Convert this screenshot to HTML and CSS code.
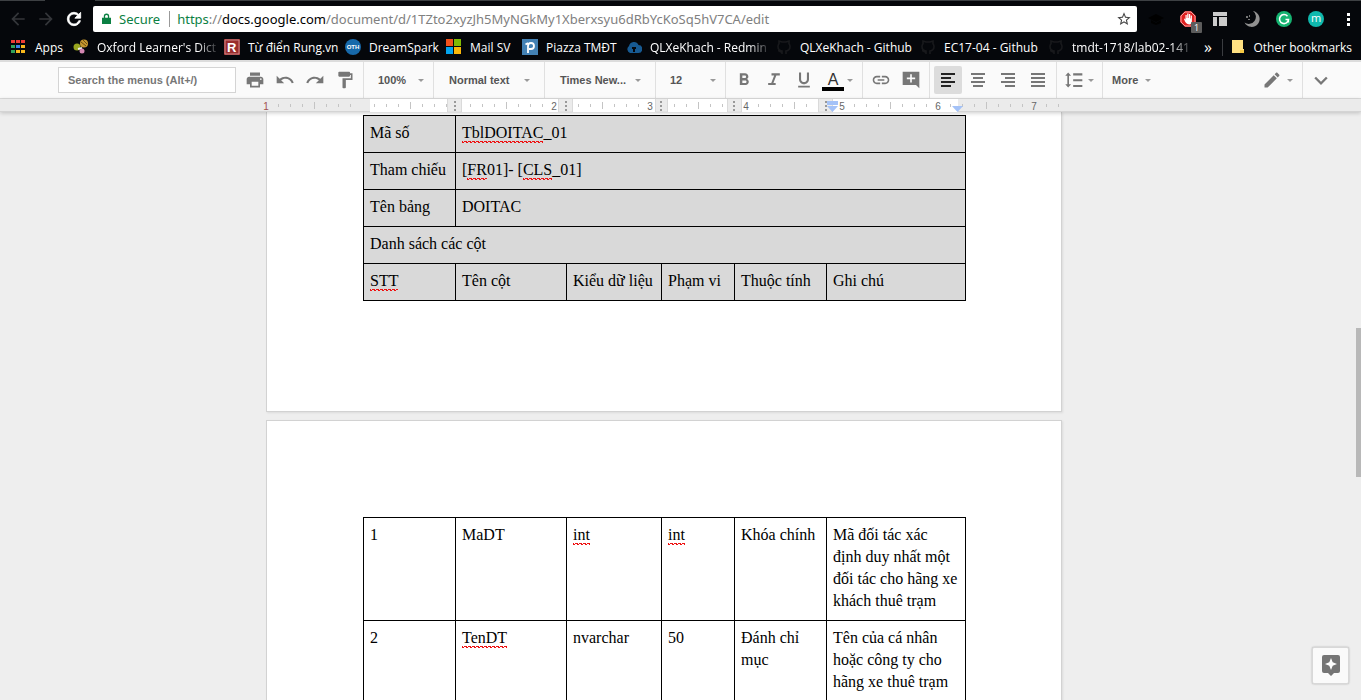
FILE: index.html
```html
<!DOCTYPE html>
<html lang="vi">
<head>
<meta charset="utf-8">
<title>Document</title>
<link rel="stylesheet" href="styles.css">
</head>
<body>
<header class="browser">
  <div class="tab-edge"></div>
  <div class="nav-row">
    <div class="nav-buttons">
      <button class="nav-btn dim" aria-label="Back"><svg viewBox="0 0 24 24"><path d="M20 11H7.83l5.59-5.59L12 4l-8 8 8 8 1.41-1.41L7.83 13H20v-2z"/></svg></button>
      <button class="nav-btn dim" aria-label="Forward"><svg viewBox="0 0 24 24"><path d="M4 13h12.17l-5.59 5.59L12 20l8-8-8-8-1.41 1.41L16.17 11H4v2z"/></svg></button>
      <button class="nav-btn" aria-label="Reload"><svg viewBox="0 0 24 24"><path d="M17.65 6.35C16.2 4.9 14.21 4 12 4c-4.42 0-7.99 3.58-7.99 8s3.57 8 7.99 8c3.73 0 6.84-2.55 7.73-6h-2.08c-.82 2.33-3.04 4-5.65 4-3.31 0-6-2.69-6-6s2.69-6 6-6c1.66 0 3.14.69 4.22 1.78L13 11h7V4l-2.35 2.35z" stroke="#fff"/></svg></button>
    </div>
    <div class="address">
      <svg class="lock" viewBox="0 0 10 13"><path d="M0 5h10v7H0zM2 5V3.500a3 3 0 0 1 6 0V5" fill="#0b8043"/><path d="M3.500 5V3.500a1.500 1.500 0 0 1 3 0V5z" fill="#fff"/></svg>
      <span class="secure">Secure</span>
      <span class="url"><span class="green">https</span>://<span class="host">docs.google.com</span>/document/d/1TZto2xyzJh5MyNGkMy1Xberxsyu6dRbYcKoSq5hV7CA/edit</span>
      <svg class="star" viewBox="0 0 24 24"><path fill="#444" d="M22 9.24l-7.19-.62L12 2 9.19 8.63 2 9.24l5.46 4.73L5.82 21 12 17.27 18.18 21l-1.63-7.03L22 9.24zM12 15.4l-3.76 2.27 1-4.28-3.32-2.88 4.38-.38L12 6.1l1.71 4.04 4.38.38-3.32 2.88 1 4.28L12 15.4z"/></svg>
    </div>
    <div class="extensions">
      <svg viewBox="0 0 16 16"><path fill="#000" d="M0 7l8-4 8 4-8 4zM3 9l5 3 5-3v3l-5 2-5-2z"/></svg>
      <span class="blocker"><svg viewBox="0 0 16 16"><path d="M5 0h6l5 5v6l-5 5H5l-5-5V5z" fill="#e02020"/><path d="M5 1h6l4 4v6l-4 4H5l-4-4V5z" fill="none" stroke="#fff" stroke-width=".6"/><path d="M4 8l1-.5L5.500 9V4h1.200v3h.5V2.500h1.300V7H9V3h1.200v4.500h.5V4.500h1.200V10c0 2-1 3.500-2.500 3.500S6 12.500 5 10.500z" fill="#fff"/></svg><span class="count">1</span></span>
      <svg viewBox="0 0 16 16"><path fill="#cbcbcb" d="M1 1h14v4H1zM1 6h4v9H1zM7 6h8v9H7z"/></svg>
      <svg viewBox="0 0 16 16"><path fill="#919191" d="M9 0a8 8 0 1 1-8.500 11.500A6 6 0 0 0 9 0z"/><path fill="#777" d="M2 5h2v2H2zM5 4h1v2H5zM4 8h2v1H4z"/></svg>
      <svg viewBox="0 0 16 16"><circle cx="8" cy="8" r="8" fill="#15b371"/><path d="M11.500 5.200A4.500 4.500 0 1 0 12.500 8.500H9.500M12.300 8.500v3" fill="none" stroke="#fff" stroke-width="1.600"/></svg>
      <span class="avatar">m</span>
      <svg viewBox="0 0 16 16"><path fill="#fff" d="M7 2h3v3H7zM7 7h3v3H7zM7 12h3v3H7z"/></svg>
    </div>
  </div>
  <nav class="bookmarks">
    <a href="#"><svg viewBox="0 0 16 16"><path fill="#ee3b34" d="M0 1h4v3H0zM5 1h4v3H5zM10 1h4v3h-4z"/><path fill="#2fa25a" d="M0 6h4v3H0zM0 11h4v3H0z"/><path fill="#3b82ea" d="M5 6h4v3H5z"/><path fill="#f8b81c" d="M10 6h4v3h-4zM5 11h4v3H5zM10 11h4v3h-4z"/><path stroke="#05070b" d="M4.500 0v15M9.500 0v15"/></svg><span>Apps</span></a>
    <a href="#"><svg viewBox="0 0 16 16"><circle cx="11" cy="4.500" r="4" fill="#c4972f"/><path d="M8 3l5 4M10 1l4 4" stroke="#6b4d12"/><circle cx="4" cy="8" r="3.500" fill="#98a51e"/><path d="M5 10l4-1" stroke="#eee" stroke-width="2"/><circle cx="9" cy="12" r="2.500" fill="#d487b2"/></svg><span class="fade">Oxford Learner's Dict</span></a>
    <a href="#"><svg viewBox="0 0 16 16"><path fill="#9a2d2d" d="M0 0h16v16H0z"/><path d="M1 1h14v14H1z" stroke="#c88" fill="none"/><text x="3" y="13" class="mark-r">R</text></svg><span>Từ điển Rung.vn</span></a>
    <a href="#"><svg viewBox="0 0 16 16"><circle cx="8" cy="8" r="8" fill="#1769aa"/><text x="8" y="10" class="mark-oth">OTH</text></svg><span>DreamSpark</span></a>
    <a href="#"><svg viewBox="0 0 16 16"><path fill="#f1511b" d="M0 0h7v7H0z"/><path fill="#80bb03" d="M8 0h7v7H8z"/><path fill="#03a4ee" d="M0 8h7v7H0z"/><path fill="#fbb809" d="M8 8h7v7H8z"/></svg><span>Mail SV</span></a>
    <a href="#"><svg viewBox="0 0 16 16"><path fill="#4381b4" d="M0 0h16v16H0z"/><path d="M6 14V7a3 3 0 1 1 3 3H7M3.500 5.500L6 4" stroke="#fff" stroke-width="1.800" fill="none"/></svg><span>Piazza TMĐT</span></a>
    <a href="#"><svg viewBox="0 0 16 16"><path fill="#175a92" d="M4 14a4 4 0 0 1-1-7 5 5 0 0 1 9.500-1A4 4 0 0 1 12 14z"/><path fill="#05070b" d="M6 8h4v2H9v3H7v-3H6z"/></svg><span class="fade">QLXeKhach - Redmin</span></a>
    <a href="#"><svg viewBox="0 0 16 16"><path d="M6 15v-3c-3-.5-4-2-4-4.500 0-1 .3-2 1-2.700L3 2l3 1h4l3-1v2.800c.7.7 1 1.700 1 2.700 0 2.500-1 4-4 4.500v3M6 13c-2 .5-2-1-4-1.500" fill="none" stroke="#18191c" stroke-width="1.600"/></svg><span>QLXeKhach - Github</span></a>
    <a href="#"><svg viewBox="0 0 16 16"><path d="M6 15v-3c-3-.5-4-2-4-4.500 0-1 .3-2 1-2.700L3 2l3 1h4l3-1v2.800c.7.7 1 1.700 1 2.700 0 2.500-1 4-4 4.500v3M6 13c-2 .5-2-1-4-1.500" fill="none" stroke="#18191c" stroke-width="1.600"/></svg><span>EC17-04 - Github</span></a>
    <a href="#"><svg viewBox="0 0 16 16"><path d="M6 15v-3c-3-.5-4-2-4-4.500 0-1 .3-2 1-2.700L3 2l3 1h4l3-1v2.800c.7.7 1 1.700 1 2.700 0 2.500-1 4-4 4.500v3M6 13c-2 .5-2-1-4-1.500" fill="none" stroke="#18191c" stroke-width="1.600"/></svg><span class="fade">tmdt-1718/lab02-141</span></a>
    <button class="overflow">»</button>
    <a href="#" class="other"><svg viewBox="0 0 16 16"><path fill="#ffe082" d="M1 1h11v9h1v4H1z"/><path fill="#f6c945" d="M9 14v-3h4v3z"/></svg><span>Other bookmarks</span></a>
  </nav>
</header>

<div class="toolbar" role="toolbar">
  <input class="search" type="text" aria-label="Search the menus" placeholder="Search the menus (Alt+/)">
  <div class="group first">
    <button aria-label="Print"><svg viewBox="0 0 24 24"><path d="M19 8H5c-1.66 0-3 1.34-3 3v6h4v4h12v-4h4v-6c0-1.66-1.34-3-3-3zm-3 11H8v-5h8v5zm3-7c-.55 0-1-.45-1-1s.45-1 1-1 1 .45 1 1-.45 1-1 1zm-1-9H6v4h12V3z"/></svg></button>
    <button aria-label="Undo"><svg viewBox="0 0 24 24"><path d="M12.500 8c-2.650 0-5.050.99-6.900 2.600L2 7v9h9l-3.620-3.620c1.390-1.160 3.160-1.880 5.120-1.880 3.540 0 6.550 2.310 7.600 5.500l2.370-.78C21.080 11.030 17.150 8 12.500 8z"/></svg></button>
    <button aria-label="Redo"><svg viewBox="0 0 24 24"><path d="M18.400 10.600C16.550 8.990 14.150 8 11.500 8c-4.650 0-8.580 3.030-9.960 7.220L3.900 16c1.050-3.190 4.050-5.500 7.600-5.500 1.950 0 3.730.72 5.120 1.880L13 16h9V7l-3.600 3.600z"/></svg></button>
    <button aria-label="Paint format"><svg viewBox="0 0 24 24"><path d="M18 4V3c0-.55-.45-1-1-1H5c-.55 0-1 .45-1 1v4c0 .55.45 1 1 1h12c.55 0 1-.45 1-1V6h1v4H9v11c0 .55.45 1 1 1h2c.55 0 1-.45 1-1v-9h8V4h-3z"/></svg></button>
  </div>
  <button class="group menu zoom"><span>100%</span><i class="caret"></i></button>
  <button class="group menu style"><span>Normal text</span><i class="caret"></i></button>
  <button class="group menu style"><span>Times New...</span><i class="caret"></i></button>
  <button class="group menu zoom"><span>12</span><i class="caret"></i></button>
  <div class="group text">
    <button aria-label="Bold"><svg viewBox="0 0 24 24"><path d="M15.600 10.790c.97-.67 1.650-1.770 1.650-2.790 0-2.260-1.750-4-4-4H7v14h7.040c2.090 0 3.710-1.700 3.710-3.790 0-1.520-.86-2.820-2.150-3.420zM10 6.500h3c.83 0 1.500.67 1.500 1.500s-.67 1.500-1.500 1.500h-3v-3zm3.500 9H10v-3h3.500c.83 0 1.500.67 1.500 1.500s-.67 1.500-1.500 1.500z"/></svg></button>
    <button aria-label="Italic"><svg viewBox="0 0 24 24"><path d="M9 4v2.500h3.200l-3.500 9H5V18h9v-2.500h-2.700l3.500-9H19V4z"/></svg></button>
    <button aria-label="Underline"><svg viewBox="0 0 24 24"><path d="M12 17c3.310 0 6-2.690 6-6V3h-2.500v8c0 1.930-1.570 3.500-3.500 3.500S8.500 12.930 8.500 11V3H6v8c0 3.310 2.690 6 6 6zm-7 2v2h14v-2H5z"/></svg></button>
    <button class="color" aria-label="Text color"><span>A</span></button><i class="caret"></i>
  </div>
  <div class="group insert">
    <button aria-label="Insert link"><svg viewBox="0 0 24 24"><path d="M3.900 12c0-1.710 1.390-3.100 3.100-3.100h4V7H7c-2.760 0-5 2.240-5 5s2.240 5 5 5h4v-1.900H7c-1.710 0-3.100-1.390-3.100-3.100zM8 13h8v-2H8v2zm9-6h-4v1.900h4c1.710 0 3.100 1.390 3.100 3.100s-1.390 3.100-3.100 3.100h-4V17h4c2.760 0 5-2.240 5-5s-2.240-5-5-5z"/></svg></button>
    <button aria-label="Add comment"><svg viewBox="0 0 24 24"><path d="M22 2H2v16h16l4 4zM17 11h-4v4h-2v-4H7V9h4V5h2v4h4v2z"/></svg></button>
  </div>
  <div class="group align">
    <button class="active" aria-label="Align left"><svg class="lines" viewBox="0 0 14 14"><path d="M0 0h14v2H0zM0 4h10v2H0zM0 8h14v2H0zM0 12h10v2H0z"/></svg></button>
    <button aria-label="Align center"><svg class="lines" viewBox="0 0 14 14"><path d="M0 0h14v2H0zM2 4h10v2H2zM0 8h14v2H0zM2 12h10v2H2z"/></svg></button>
    <button aria-label="Align right"><svg class="lines" viewBox="0 0 14 14"><path d="M0 0h14v2H0zM4 4h10v2H4zM0 8h14v2H0zM4 12h10v2H4z"/></svg></button>
    <button aria-label="Justify"><svg class="lines" viewBox="0 0 14 14"><path d="M0 0h14v2H0zM0 4h14v2H0zM0 8h14v2H0zM0 12h14v2H0z"/></svg></button>
  </div>
  <button class="group spacing" aria-label="Line spacing"><svg viewBox="0 0 24 24"><path d="M6 7h2.500L5 3 1.500 7H4v10H1.500L5 21l3.500-4H6V7zm5-3v2.500h11V4zm0 14v2.500h11V18zm0-7v2.500h11V11z"/></svg><i class="caret"></i></button>
  <button class="group more"><span>More</span><i class="caret"></i></button>
  <button class="group mode" aria-label="Editing mode"><svg viewBox="0 0 24 24"><path d="M3 17.250V21h3.750L17.810 9.940l-3.750-3.750L3 17.250zM20.710 7.040c.39-.39.39-1.020 0-1.410l-2.340-2.340c-.39-.39-1.020-.39-1.410 0l-1.830 1.830 3.750 3.750 1.830-1.830z"/></svg><i class="caret"></i></button>
  <button class="group collapse" aria-label="Hide the menus"><svg viewBox="0 0 24 24"><path d="M18 8l-6 6-6-6-2 2 8 8 8-8z"/></svg></button>
</div>

<div class="ruler">
  <svg class="ruler-scale" viewBox="0 0 796 13">
    <defs>
      <pattern id="ticks" width="96" height="14" patternUnits="userSpaceOnUse"><path fill="#c4c4c4" d="M12 5h1v3h-1zM24 5h1v3h-1zM36 5h1v3h-1zM48 3h1v7h-1zM60 5h1v3h-1zM72 5h1v3h-1zM84 5h1v3h-1z"/></pattern>
    </defs>
    <path fill="#fff" d="M104 0h588v13H104z"/>
    <path fill="url(#ticks)" d="M0 0h796v13H0z"/>
    <g fill="#ebebeb" stroke="#dadada"><path d="M181.500 0v13h14V0M292.500 0v13h14V0M389.500 0v13h12V0M461.500 0v13h14V0M552.500 0v13h14V0"/></g>
    <path fill="#999" d="M188 2h2v2h-2zM188 6h2v2h-2zM188 10h2v2h-2zM299 2h2v2h-2zM299 6h2v2h-2zM299 10h2v2h-2zM394 2h2v2h-2zM394 6h2v2h-2zM394 10h2v2h-2zM467 2h2v2h-2zM467 6h2v2h-2zM467 10h2v2h-2zM559 2h2v2h-2zM559 6h2v2h-2zM559 10h2v2h-2z"/>
    <path fill="#a4c2f7" d="M561 2h11v4h-11zM561 7h11l-5.500 6zM686 7h11l-5.500 6z"/>
    <g class="ruler-num"><text x="0" y="11" class="red">1</text><text x="288" y="11">2</text><text x="384" y="11">3</text><text x="480" y="11">4</text><text x="576" y="11">5</text><text x="672" y="11">6</text><text x="768" y="11">7</text></g>
  </svg>
</div>

<main class="editor">
  <section class="page upper">
    <table class="shaded">
      <colgroup><col class="c1"><col class="c2"><col class="c3"><col class="c4"><col class="c5"><col class="c6"></colgroup>
      <tr><td>Mã số</td><td colspan="5"><span class="typo">TblDOITAC</span>_01</td></tr>
      <tr><td>Tham chiếu</td><td colspan="5">[<span class="typo">FR</span>01]- [<span class="typo">CLS</span>_01]</td></tr>
      <tr><td>Tên bảng</td><td colspan="5">DOITAC</td></tr>
      <tr><td colspan="6">Danh sách các cột</td></tr>
      <tr><td><span class="typo">STT</span></td><td>Tên cột</td><td>Kiểu dữ liệu</td><td>Phạm vi</td><td>Thuộc tính</td><td>Ghi chú</td></tr>
    </table>
  </section>
  <section class="page lower">
    <table>
      <colgroup><col class="c1"><col class="c2"><col class="c3"><col class="c4"><col class="c5"><col class="c6"></colgroup>
      <tr><td>1</td><td>MaDT</td><td><span class="typo">int</span></td><td><span class="typo">int</span></td><td>Khóa chính</td><td>Mã đối tác xác định duy nhất một đối tác cho hãng xe khách thuê trạm</td></tr>
      <tr><td>2</td><td><span class="typo">TenDT</span></td><td>nvarchar</td><td>50</td><td>Đánh chỉ mục</td><td>Tên của cá nhân hoặc công ty cho hãng xe thuê trạm</td></tr>
    </table>
  </section>
  <div class="thumb"></div>
  <button class="explore" aria-label="Explore"><svg viewBox="0 0 18 21"><path d="M2 0h14a2 2 0 0 1 2 2v14a2 2 0 0 1-2 2h-4l-3 3-3-3H2a2 2 0 0 1-2-2V2a2 2 0 0 1 2-2z" fill="#757575"/><path d="M9 3l1.700 4.300L15 9l-4.300 1.700L9 15l-1.700-4.300L3 9l4.300-1.700z" fill="#fff"/></svg></button>
</main>
</body>
</html>
```

FILE: styles.css
```css
* { box-sizing: border-box; }
body {
  margin: 0;
  height: 100vh;
  display: flex;
  flex-direction: column;
  overflow: hidden;
  background: #eee;
  font-family: "Liberation Sans", Arial, sans-serif;
}
button { border: 0; padding: 0; background: none; font: inherit; color: inherit; }
svg { display: block; flex: none; }

/* Browser frame */
.browser { flex: none; background: #05070b; color: #fff; font-family: "Open Sans", "Noto Sans", sans-serif; }
.tab-edge { height: 1px; background: linear-gradient(90deg, #3d4043 45px, #05070b 45px, #05070b 95px, #3d4043 95px); }
.nav-row { display: flex; align-items: center; height: 36px; }
.nav-buttons { display: flex; width: 93px; padding-left: 8px; gap: 8px; }
.nav-btn { fill: #fff; }
.nav-btn svg { width: 20px; height: 20px; }
.nav-btn.dim { fill: #34363a; }
.address {
  flex: 1;
  display: flex;
  align-items: center;
  height: 26px;
  padding: 0 5px 0 9px;
  background: #fff;
  border-radius: 2px;
  font-family: "Noto Sans", "Open Sans", sans-serif;
  font-size: 13px;
  color: #808080;
}
.lock { width: 9px; height: 12px; }
.secure { margin-left: 8px; padding-right: 9px; border-right: 1px solid #999; line-height: 16px; color: #0b8043; }
.url { flex: 1; margin-left: 7px; white-space: nowrap; }
.green { color: #0b8043; }
.host { color: #000; }
.star { width: 16px; height: 16px; }
.extensions { display: flex; align-items: center; gap: 16px; width: 224px; padding-left: 11px; }
.extensions svg { width: 16px; height: 16px; }
.blocker { position: relative; }
.count { position: absolute; left: 11px; top: 11px; width: 11px; height: 11px; background: #5c5c5c; border-radius: 1px; font: 9px/11px "Open Sans", sans-serif; text-align: center; }
.avatar { width: 16px; height: 16px; border-radius: 50%; background: #0fb8ad; font-size: 11px; line-height: 14px; text-align: center; }
.bookmarks {
  display: grid;
  grid-template-columns: 62px 151px 121px 101px 76px 104px 150px 144px 128px 149px 1fr auto;
  align-items: center;
  height: 23px;
  padding: 0 9px 3px 11px;
  font-size: 12px;
}
.bookmarks a { display: flex; align-items: center; gap: 8px; color: #fff; text-decoration: none; white-space: nowrap; }
.bookmarks svg { width: 16px; height: 16px; }
.fade { -webkit-mask-image: linear-gradient(90deg, #000 84%, rgba(0, 0, 0, .2)); mask-image: linear-gradient(90deg, #000 84%, rgba(0, 0, 0, .2)); }
.mark-r { font: bold 13px "Liberation Sans", sans-serif; fill: #fff; }
.mark-oth { font: bold 6px "Liberation Sans", sans-serif; fill: #fff; text-anchor: middle; }
.overflow { justify-self: start; padding-left: 7px; font-size: 16px; line-height: 16px; }
.bookmarks .other { gap: 6px; padding-left: 8px; border-left: 1px solid #3a3c40; }

/* Document toolbar */
.toolbar {
  flex: none;
  display: flex;
  align-items: center;
  height: 39px;
  padding-left: 58px;
  background: #fafafa;
  border-top: 2px solid #dcdcdc;
  border-bottom: 1px solid #ddd;
  color: #555;
  font-size: 11px;
  font-weight: bold;
}
.toolbar svg { width: 20px; height: 20px; fill: #777; }
.search { width: 178px; height: 26px; padding: 0 9px; border: 1px solid #d4d4d4; font: bold 11px "Liberation Sans", Arial, sans-serif; background: #fff; }
.search::placeholder { color: #777; opacity: 1; }
.group { display: flex; align-items: center; height: 36px; border-left: 1px solid #e0e0e0; }
.group.first { width: 127px; padding-left: 4px; border-left: 0; }
.group button { display: flex; align-items: center; justify-content: center; width: 30px; height: 28px; flex: none; }
.caret { flex: none; border: 3px solid transparent; border-top-color: #999; border-bottom: 0; }
.menu { justify-content: space-between; padding: 0 9px 0 14px; }
.zoom { width: 70px; }
.style { width: 111px; padding-left: 15px; padding-right: 14px; }
.text { width: 137px; padding-left: 3px; }
.color span { width: 22px; height: 22px; padding-top: 2px; border-bottom: 4px solid #000; font: 16px/18px "Liberation Sans", sans-serif; color: #333; text-align: center; }
.text > .color { width: 28px; }
.insert { width: 67px; padding-left: 3px; }
.align { width: 127px; padding-left: 4px; gap: 2px; }
.align button { width: 28px; }
.group .active { background: #dcdcdc; border-radius: 2px; }
.toolbar .lines { width: 14px; height: 14px; }
.toolbar .active .lines { fill: #222; }
.spacing { width: 46px; padding-left: 7px; gap: 4px; }
.more { padding-left: 9px; gap: 7px; }
.mode { margin-left: auto; padding-right: 9px; gap: 5px; border-left: 0; }
.collapse { width: 59px; padding-left: 8px; }

/* Ruler */
.ruler { flex: none; display: flex; justify-content: center; height: 13px; padding-right: 33px; background: #ebebeb; border-bottom: 1px solid #d4d4d4; box-shadow: 0 1px 4px rgba(0, 0, 0, .2); position: relative; z-index: 1; }
.ruler-scale { width: 796px; height: 13px; overflow: visible; }
.ruler-num { font: 10px "Liberation Sans", sans-serif; fill: #666; text-anchor: middle; }
.ruler-num .red { fill: #a05050; }

/* Pages */
.editor {
  position: relative;
  flex: 1;
  min-height: 0;
  display: flex;
  flex-direction: column;
  align-items: center;
  gap: 8px;
  padding-right: 33px;
  overflow: hidden;
}
.page { flex: none; width: 796px; padding: 96px; background: #fff; border: 1px solid #d2d2d2; box-shadow: 1px 1px 2px rgba(0, 0, 0, .08); }
.page.upper { padding-top: 3px; padding-bottom: 110px; border-top: 0; }
table { width: 603px; table-layout: fixed; border-collapse: collapse; font: 16px/22px "Liberation Serif", "Times New Roman", serif; color: #000; }
td { padding: 6px 6px 8px; border: 1px solid #000; vertical-align: top; }
.shaded { background: #d9d9d9; }
.c1 { width: 92px; }
.c2 { width: 111px; }
.c3 { width: 95px; }
.c4 { width: 73px; }
.c5 { width: 92px; }
.c6 { width: 139px; }
.typo {
  padding-bottom: 2px;
  background:
    linear-gradient(90deg, #e11 2px, transparent 2px) 0 100% / 4px 1px repeat-x,
    linear-gradient(90deg, #e11 1px, transparent 1px, transparent 2px, #e11 2px) 0 calc(100% - 1px) / 4px 1px repeat-x;
}
.thumb { position: absolute; right: 0; top: 216px; width: 5px; height: 149px; background: #b8b8b8; }
.explore {
  position: absolute;
  right: 12px;
  bottom: 16px;
  display: flex;
  align-items: center;
  justify-content: center;
  width: 37px;
  height: 37px;
  background: #fafafa;
  border: 1px solid #d8d8d8;
  border-radius: 2px;
  box-shadow: 0 0 2px rgba(0, 0, 0, .3);
}
.explore svg { width: 18px; height: 21px; }
```
